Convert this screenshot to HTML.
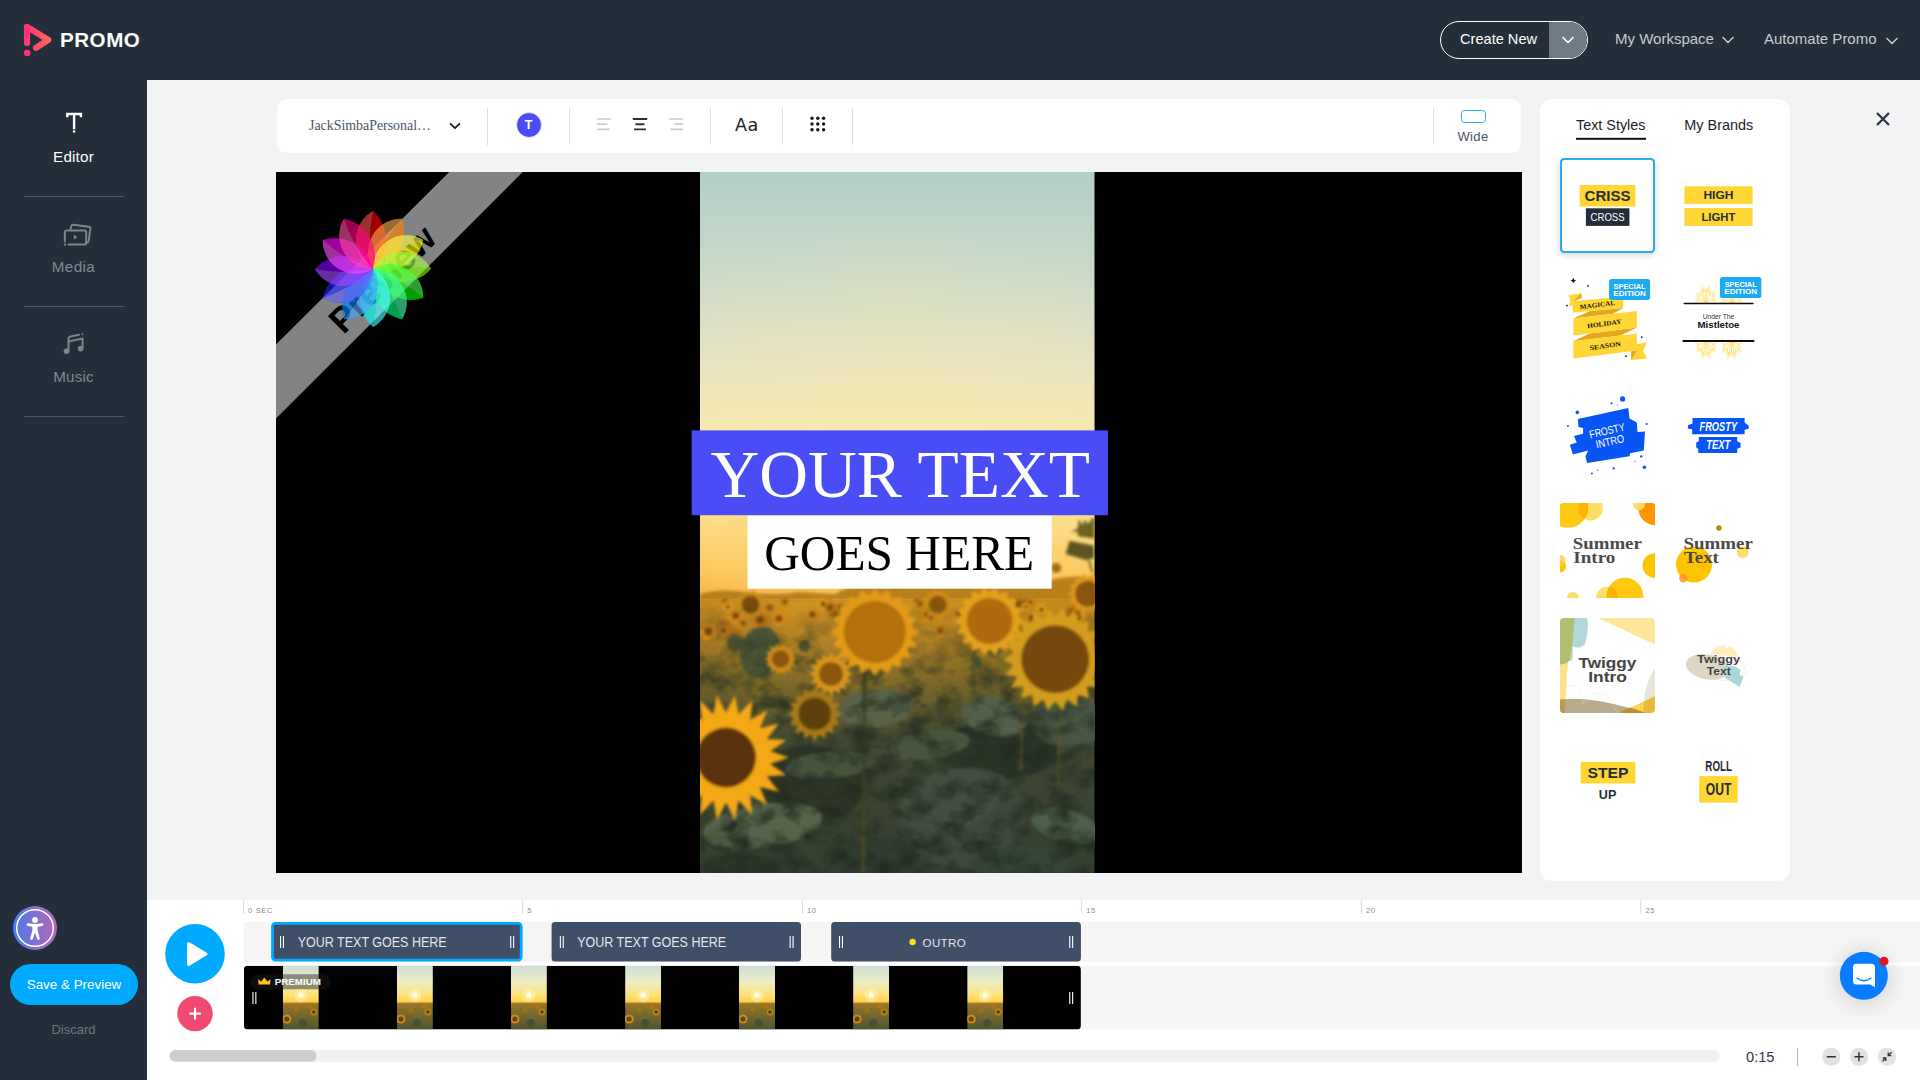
<!DOCTYPE html>
<html lang="en">
<head>
<meta charset="utf-8">
<title>Promo Editor</title>
<style>
*{box-sizing:border-box;margin:0;padding:0}
html,body{width:1920px;height:1080px;overflow:hidden;background:#f2f3f5;font-family:"Liberation Sans",sans-serif;}
.abs{position:absolute}
#topbar{position:absolute;left:0;top:0;width:1920px;height:80px;background:#232e3a}
#sidebar{position:absolute;left:0;top:80px;width:147px;height:1000px;background:#232e3a}
#toolbar{position:absolute;left:277px;top:99px;width:1244px;height:54px;background:#fff;border-radius:10px}
#canvas{position:absolute;left:276px;top:172px;width:1246px;height:701px;background:#000;overflow:hidden}
#panel{position:absolute;left:1540px;top:99px;width:250px;height:782px;background:#fff;border-radius:12px}
#timeline{position:absolute;left:147px;top:900px;width:1773px;height:180px;background:#fff}
.dv{top:9px;width:1px;height:37px;background:#d9dde3}
.t{position:absolute;white-space:nowrap;line-height:1}
</style>
</head>
<body>
<div id="topbar">
<svg class="abs" style="left:20px;top:20px" width="36" height="40" viewBox="20 20 36 40">
<defs><linearGradient id="lg1" x1="23" y1="0" x2="52" y2="0" gradientUnits="userSpaceOnUse"><stop offset="0" stop-color="#ff2e74"/><stop offset="1" stop-color="#ff6b5e"/></linearGradient></defs>
<path d="M27 43 L27 26.8 L48.2 39.8 L36 47.8" fill="none" stroke="url(#lg1)" stroke-width="6.2" stroke-linecap="round" stroke-linejoin="round"/>
<circle cx="27.2" cy="53" r="3.3" fill="#ff2e74"/>
</svg>
<div class="t" id="promo" style="left:60px;top:29px;font-size:20.6px;font-weight:bold;color:#fff;letter-spacing:0.5px;line-height:22px">PROMO</div>
<div class="abs" style="left:1440px;top:21px;width:148px;height:38px;border:1px solid #fff;border-radius:19px;overflow:hidden">
  <div class="abs" style="left:108px;top:0;width:40px;height:38px;background:#717b85"></div>
  <svg class="abs" style="left:120px;top:13px" width="14" height="10" viewBox="0 0 14 10"><path d="M2 2.5 L7 7.5 L12 2.5" fill="none" stroke="#fff" stroke-width="1.6" stroke-linecap="round" stroke-linejoin="round"/></svg>
</div>
<div class="t" id="cn" style="left:1460px;top:30px;font-size:14.6px;color:#fff;line-height:18px">Create New</div>
<div class="t" id="mw" style="left:1615px;top:30px;font-size:15px;color:#c6cbd0;line-height:18px">My Workspace</div>
<svg class="abs" style="left:1721px;top:35px" width="14" height="10" viewBox="0 0 14 10"><path d="M2 2.5 L7 7.5 L12 2.5" fill="none" stroke="#c6cbd0" stroke-width="1.5" stroke-linecap="round" stroke-linejoin="round"/></svg>
<div class="t" id="ap" style="left:1764px;top:30px;font-size:15px;color:#c6cbd0;line-height:18px">Automate Promo</div>
<svg class="abs" style="left:1885px;top:36px" width="14" height="10" viewBox="0 0 14 10"><path d="M2 2.5 L7 7.5 L12 2.5" fill="none" stroke="#c6cbd0" stroke-width="1.5" stroke-linecap="round" stroke-linejoin="round"/></svg>
</div>
<div id="sidebar" style="top:80px">
<!-- coordinates relative to page: subtract 80 from y -->
<svg class="abs" style="left:60px;top:28px" width="30" height="28" viewBox="60 108 30 28">
<path d="M67.3 117.2 L67.3 114 L80.9 114 L80.9 117.2 M74.1 114 L74.1 129.2" fill="none" stroke="#fff" stroke-width="2.4" stroke-linejoin="miter"/>
<rect x="72.9" y="130.4" width="2.4" height="2.2" fill="#fff"/>
</svg>
<div class="t" id="ed" style="left:0;width:147px;text-align:center;top:68px;font-size:15.2px;color:#fff;line-height:18px;letter-spacing:0.2px">Editor</div>
<div class="abs" style="left:24px;top:116px;width:100px;height:1px;background:#4b5965"></div>
<svg class="abs" style="left:58px;top:138px" width="40" height="32" viewBox="58 218 40 32">
<g fill="none" stroke="#78868e" stroke-width="2" stroke-linecap="round" stroke-linejoin="round">
<path d="M70.5 229.5 L71.2 226.3 Q71.6 224.6 73.3 224.8 L88.8 226.8 Q90.6 227.1 90.4 228.9 L88.6 241 Q88.3 242.6 86.8 242.4"/>
<path d="M64.8 241.5 L64.8 232.8 Q64.8 230.6 67 230.6 L84 230.6 Q86.2 230.6 86.2 232.8 L86.2 242.4 Q86.2 244.6 84 244.6 L68.5 244.6"/>
</g>
<rect x="64" y="243.6" width="2" height="2" fill="#78868e"/>
<path d="M73.8 234.6 L77.4 237.2 L73.8 239.8 Z" fill="#78868e"/>
</svg>
<div class="t" id="md" style="left:0;width:147px;text-align:center;top:178px;font-size:15.2px;color:#7d8a92;line-height:18px;letter-spacing:0.4px">Media</div>
<div class="abs" style="left:24px;top:226px;width:100px;height:1px;background:#4b5965"></div>
<svg class="abs" style="left:58px;top:248px" width="32" height="30" viewBox="58 328 32 30">
<g fill="#78868e">
<circle cx="66.5" cy="351.2" r="2.8"/><circle cx="80.6" cy="348.6" r="2.8"/>
<circle cx="82.4" cy="334.2" r="1"/>
</g>
<g fill="none" stroke="#78868e" stroke-width="2" stroke-linecap="round" stroke-linejoin="round">
<path d="M68.5 351 L68.5 339 Q68.5 337 70.5 336.6 L79 334.8"/>
<path d="M68.6 341.6 L82.6 338.6 L82.6 348.5"/>
</g>
</svg>
<div class="t" id="mu" style="left:0;width:147px;text-align:center;top:288px;font-size:15.2px;color:#7d8a92;line-height:18px;letter-spacing:0.2px">Music</div>
<div class="abs" style="left:24px;top:336px;width:100px;height:1px;background:#4b5965"></div>

<div class="abs" style="left:13px;top:826px;width:44px;height:44px;border-radius:50%;background:linear-gradient(90deg,#4a7ce9,#b866b4)"></div>
<svg class="abs" style="left:13px;top:826px" width="44" height="44" viewBox="0 0 44 44">
<circle cx="22" cy="22" r="18.3" fill="none" stroke="#fff" stroke-width="1.5"/>
<circle cx="22" cy="14" r="2.9" fill="#fff"/>
<path d="M13.6 18 Q13.2 19.6 14.8 19.9 L19.4 20.8 L19.4 24.5 L17.2 32.2 Q16.9 33.6 18.2 33.9 Q19.4 34.1 19.8 32.9 L22 26.6 L24.2 32.9 Q24.6 34.1 25.8 33.9 Q27.1 33.6 26.8 32.2 L24.6 24.5 L24.6 20.8 L29.2 19.9 Q30.8 19.6 30.4 18 Q30 17 28.6 17.3 Q22 18.9 15.4 17.3 Q14 17 13.6 18 Z" fill="#fff"/>
</svg>
<div class="abs" style="left:10px;top:884px;width:128px;height:41px;border-radius:21px;background:#00aaff"></div>
<div class="t" id="sp" style="left:10px;width:128px;text-align:center;top:897px;font-size:13.4px;color:#fff;line-height:16px">Save &amp; Preview</div>
<div class="t" id="dc" style="left:0;width:147px;text-align:center;top:942px;font-size:13px;color:#6c7780;line-height:16px">Discard</div>
</div>
<div id="toolbar">
<!-- page coords: subtract 277 x, 99 y -->
<div class="t" id="fn" style="left:32px;top:18px;font-family:'Liberation Serif',serif;font-size:13.9px;color:#4a5568;line-height:18px">JackSimbaPersonal…</div>
<svg class="abs" style="left:171px;top:21px" width="14" height="12" viewBox="0 0 14 12"><path d="M2.6 3.8 L7 8.2 L11.4 3.8" fill="none" stroke="#1d2126" stroke-width="1.8" stroke-linecap="round" stroke-linejoin="round"/></svg>
<div class="abs dv" style="left:210px"></div>
<div class="abs" style="left:238.5px;top:12.5px;width:26px;height:26px;border-radius:50%;background:#4a4df4;border:1.5px solid #e4e5fb"></div>
<div class="t" style="left:238.5px;top:18.5px;width:26px;text-align:center;font-size:12.5px;font-weight:bold;color:#fff;line-height:14px">T</div>
<div class="abs dv" style="left:292px"></div>
<svg class="abs" style="left:315px;top:14px" width="100" height="22" viewBox="592 113 100 22">
<g fill="none" stroke-width="1.7" stroke="#c6cbd4">
<path d="M597 119 H611.2 M597 124.2 H607.4 M597 129.4 H609.8"/>
<path d="M668.8 119 H683.2 M674.4 124.2 H683.2 M670.3 129.4 H683.2"/>
</g>
<path d="M632.8 119 H647.2 M635.4 124.2 H644.4 M634 129.4 H646" fill="none" stroke="#2b2f36" stroke-width="1.9"/>
</svg>
<div class="abs dv" style="left:433px"></div>
<div class="t" id="aa" style="left:458px;top:15px;letter-spacing:0.6px;font-family:'DejaVu Sans','Liberation Sans',sans-serif;font-size:17.5px;color:#1d2126;line-height:22px">Aa</div>
<div class="abs dv" style="left:505px"></div>
<svg class="abs" style="left:531px;top:15px" width="20" height="20" viewBox="808 114 20 20"><g fill="#16191d">
<circle cx="812" cy="118.2" r="1.7"/><circle cx="817.8" cy="118.2" r="1.7"/><circle cx="823.6" cy="118.2" r="1.7"/>
<circle cx="812" cy="124" r="1.7"/><circle cx="817.8" cy="124" r="1.7"/><circle cx="823.6" cy="124" r="1.7"/>
<circle cx="812" cy="129.8" r="1.7"/><circle cx="817.8" cy="129.8" r="1.7"/><circle cx="823.6" cy="129.8" r="1.7"/>
</g></svg>
<div class="abs dv" style="left:575px"></div>
<div class="abs dv" style="left:1156px"></div>
<div class="abs" style="left:1184px;top:11px;width:25px;height:13px;border:1.3px solid #2aaaf2;border-radius:3.5px"></div>
<div class="t" id="wd" style="left:1166px;width:60px;text-align:center;top:30px;font-size:13px;color:#4a5568;line-height:16px;letter-spacing:0.4px">Wide</div>
</div>
<div id="canvas">
<svg class="abs" style="left:0;top:0" width="1246" height="701" viewBox="276 172 1246 701">
<defs>
<linearGradient id="sky" x1="0" y1="172" x2="0" y2="600" gradientUnits="userSpaceOnUse">
<stop offset="0" stop-color="#b2cfc8"/><stop offset="0.2" stop-color="#c6d8c8"/><stop offset="0.42" stop-color="#e2e2c5"/><stop offset="0.6" stop-color="#f6e7b6"/><stop offset="0.8" stop-color="#fbdd84"/><stop offset="0.93" stop-color="#fac04c"/><stop offset="0.975" stop-color="#f7ac36"/><stop offset="1" stop-color="#f3a02a"/>
</linearGradient>
<radialGradient id="warm" cx="897" cy="560" r="340" gradientUnits="userSpaceOnUse"><stop offset="0" stop-color="#ffe9a4" stop-opacity="0.6"/><stop offset="0.5" stop-color="#ffe9a4" stop-opacity="0.3"/><stop offset="1" stop-color="#ffe9a4" stop-opacity="0"/></radialGradient>
<linearGradient id="field" x1="0" y1="596" x2="0" y2="873" gradientUnits="userSpaceOnUse">
<stop offset="0" stop-color="#cf8e1e"/><stop offset="0.15" stop-color="#a67a20"/><stop offset="0.33" stop-color="#6e6029"/><stop offset="0.5" stop-color="#414932"/><stop offset="1" stop-color="#343e30"/>
</linearGradient>
<radialGradient id="glow" cx="850" cy="596" r="170" gradientUnits="userSpaceOnUse"><stop offset="0" stop-color="#ffbe48" stop-opacity="0.75"/><stop offset="1" stop-color="#ffb030" stop-opacity="0"/></radialGradient>
<clipPath id="vclip"><rect x="700" y="172" width="394.5" height="701"/></clipPath>
<filter id="bl" x="-5%" y="-5%" width="110%" height="110%"><feGaussianBlur stdDeviation="1.8"/></filter>
<filter id="tex" x="0" y="0" width="100%" height="100%" color-interpolation-filters="sRGB"><feTurbulence type="fractalNoise" baseFrequency="0.04 0.055" numOctaves="3" seed="5"/><feColorMatrix type="matrix" values="0 0 0 0 0.13  0 0 0 0 0.17  0 0 0 0 0.12  0 0 0 2.4 -0.95"/></filter>
<linearGradient id="tmg" x1="0" y1="600" x2="0" y2="873" gradientUnits="userSpaceOnUse"><stop offset="0" stop-color="#fff" stop-opacity="0"/><stop offset="0.12" stop-color="#fff" stop-opacity="0.35"/><stop offset="0.4" stop-color="#fff" stop-opacity="0.8"/><stop offset="1" stop-color="#fff" stop-opacity="0.9"/></linearGradient><mask id="tmask" maskUnits="userSpaceOnUse" x="700" y="596" width="395" height="277"><rect x="700" y="596" width="395" height="277" fill="url(#tmg)"/></mask>
</defs>
<g clip-path="url(#vclip)">
<rect x="700" y="172" width="395" height="430" fill="url(#sky)"/>
<rect x="700" y="596" width="395" height="277" fill="url(#field)"/>
<rect x="700" y="172" width="395" height="428" fill="url(#warm)"/><rect x="700" y="420" width="395" height="180" fill="url(#glow)" opacity="0.45"/><rect x="700" y="596" width="395" height="180" fill="url(#glow)" opacity="0.3"/>
<g filter="url(#bl)">
<!--SF-BEGIN-->
<path d="M700 597 L700 594 Q720 588 745 592 Q770 596 800 592 L835 594 Q850 584 870 586 Q900 580 930 584 Q960 578 990 582 Q1020 576 1050 580 Q1075 574 1095 578 L1095 600 L700 600 Z" fill="#b97f1c"/>
<polygon points="1078.7,519.3 1082.8,524.9 1084.9,519.3 1087.9,523.9 1093.0,517.2 1094.5,519.3 1094.5,538.6 1078.7,536.6 1076.7,531.5 1070.6,532.0 1077.7,528.4" fill="#6e6222"/><polygon points="1065.5,553.9 1069.6,540.7 1094.0,545.8 1094.0,558.0 1085.9,560.0" fill="#5c5420"/><path d="M1088.5 560 L1092.5 572" stroke="#5c5420" stroke-width="1.6"/><circle cx="1056.3" cy="568" r="5" fill="#a86a14"/>
<circle cx="827.9" cy="604.3" r="5.3" fill="#d98a18"/><circle cx="827.9" cy="604.3" r="2.7" fill="#7a4a10"/>
<circle cx="1024.4" cy="602.0" r="4.8" fill="#b8801a"/><circle cx="1024.4" cy="602.0" r="2.4" fill="#7a4a10"/>
<circle cx="784.8" cy="601.6" r="4.3" fill="#c27a14"/><circle cx="784.8" cy="601.6" r="2.2" fill="#7a4a10"/>
<circle cx="735.8" cy="615.8" r="7.3" fill="#d98a18"/><circle cx="735.8" cy="615.8" r="3.6" fill="#7a4a10"/>
<circle cx="1074.2" cy="624.5" r="7.2" fill="#d98a18"/><circle cx="1074.2" cy="624.5" r="3.6" fill="#7a4a10"/>
<circle cx="928.0" cy="614.7" r="7.7" fill="#d98a18"/><circle cx="928.0" cy="614.7" r="3.9" fill="#7a4a10"/>
<circle cx="919.9" cy="603.6" r="4.5" fill="#b8801a"/><circle cx="919.9" cy="603.6" r="2.3" fill="#7a4a10"/>
<circle cx="746.5" cy="611.0" r="6.7" fill="#c27a14"/><circle cx="746.5" cy="611.0" r="3.3" fill="#7a4a10"/>
<circle cx="740.7" cy="622.0" r="5.2" fill="#d98a18"/><circle cx="740.7" cy="622.0" r="2.6" fill="#7a4a10"/>
<circle cx="916.4" cy="600.6" r="3.2" fill="#c27a14"/><circle cx="916.4" cy="600.6" r="1.6" fill="#7a4a10"/>
<circle cx="896.1" cy="620.3" r="7.6" fill="#a86a14"/><circle cx="896.1" cy="620.3" r="3.8" fill="#7a4a10"/>
<circle cx="931.3" cy="617.0" r="5.3" fill="#c27a14"/><circle cx="931.3" cy="617.0" r="2.6" fill="#7a4a10"/>
<circle cx="976.1" cy="608.3" r="5.5" fill="#b8801a"/><circle cx="976.1" cy="608.3" r="2.7" fill="#7a4a10"/>
<circle cx="895.6" cy="612.4" r="5.5" fill="#b8801a"/><circle cx="895.6" cy="612.4" r="2.7" fill="#7a4a10"/>
<circle cx="1087.2" cy="603.0" r="4.4" fill="#e8a020"/><circle cx="1087.2" cy="603.0" r="2.2" fill="#7a4a10"/>
<circle cx="760.0" cy="618.5" r="4.3" fill="#d98a18"/><circle cx="760.0" cy="618.5" r="2.2" fill="#7a4a10"/>
<circle cx="1002.0" cy="622.1" r="8.3" fill="#e8a020"/><circle cx="1002.0" cy="622.1" r="4.1" fill="#7a4a10"/>
<circle cx="834.3" cy="612.7" r="5.7" fill="#a86a14"/><circle cx="834.3" cy="612.7" r="2.8" fill="#7a4a10"/>
<circle cx="727.2" cy="601.9" r="3.9" fill="#d98a18"/><circle cx="727.2" cy="601.9" r="1.9" fill="#7a4a10"/>
<circle cx="724.0" cy="627.5" r="7.8" fill="#a86a14"/><circle cx="724.0" cy="627.5" r="3.9" fill="#7a4a10"/>
<circle cx="812.4" cy="614.2" r="6.5" fill="#d98a18"/><circle cx="812.4" cy="614.2" r="3.2" fill="#7a4a10"/>
<circle cx="1071.6" cy="612.9" r="6.1" fill="#a86a14"/><circle cx="1071.6" cy="612.9" r="3.1" fill="#7a4a10"/>
<circle cx="723.3" cy="630.3" r="5.6" fill="#c27a14"/><circle cx="723.3" cy="630.3" r="2.8" fill="#7a4a10"/>
<circle cx="857.2" cy="636.5" r="8.0" fill="#c27a14"/><circle cx="857.2" cy="636.5" r="4.0" fill="#7a4a10"/>
<circle cx="877.4" cy="621.1" r="8.2" fill="#a86a14"/><circle cx="877.4" cy="621.1" r="4.1" fill="#7a4a10"/>
<circle cx="1041.3" cy="609.7" r="5.1" fill="#e8a020"/><circle cx="1041.3" cy="609.7" r="2.5" fill="#7a4a10"/>
<circle cx="969.7" cy="614.0" r="4.8" fill="#d98a18"/><circle cx="969.7" cy="614.0" r="2.4" fill="#7a4a10"/>
<circle cx="769.6" cy="607.7" r="4.3" fill="#a86a14"/><circle cx="769.6" cy="607.7" r="2.1" fill="#7a4a10"/>
<circle cx="1028.3" cy="605.7" r="4.2" fill="#c27a14"/><circle cx="1028.3" cy="605.7" r="2.1" fill="#7a4a10"/>
<circle cx="865.5" cy="613.5" r="6.0" fill="#c27a14"/><circle cx="865.5" cy="613.5" r="3.0" fill="#7a4a10"/>
<circle cx="972.7" cy="619.7" r="6.9" fill="#d98a18"/><circle cx="972.7" cy="619.7" r="3.4" fill="#7a4a10"/>
<circle cx="880.4" cy="634.6" r="10.2" fill="#b8801a"/><circle cx="880.4" cy="634.6" r="5.1" fill="#7a4a10"/>
<circle cx="855.0" cy="614.8" r="4.3" fill="#a86a14"/><circle cx="855.0" cy="614.8" r="2.2" fill="#7a4a10"/>
<circle cx="724.6" cy="600.8" r="3.6" fill="#c27a14"/><circle cx="724.6" cy="600.8" r="1.8" fill="#7a4a10"/>
<circle cx="743.4" cy="623.2" r="4.9" fill="#b8801a"/><circle cx="743.4" cy="623.2" r="2.5" fill="#7a4a10"/>
<circle cx="759.7" cy="602.3" r="4.2" fill="#d98a18"/><circle cx="759.7" cy="602.3" r="2.1" fill="#7a4a10"/>
<circle cx="727.8" cy="606.7" r="4.7" fill="#e8a020"/><circle cx="727.8" cy="606.7" r="2.3" fill="#7a4a10"/>
<circle cx="1077.4" cy="623.3" r="6.6" fill="#d98a18"/><circle cx="1077.4" cy="623.3" r="3.3" fill="#7a4a10"/>
<circle cx="1035.3" cy="639.7" r="8.2" fill="#a86a14"/><circle cx="1035.3" cy="639.7" r="4.1" fill="#7a4a10"/>
<circle cx="823.2" cy="604.1" r="5.6" fill="#e8a020"/><circle cx="823.2" cy="604.1" r="2.8" fill="#7a4a10"/>
<circle cx="889.1" cy="627.1" r="7.2" fill="#c27a14"/><circle cx="889.1" cy="627.1" r="3.6" fill="#7a4a10"/>
<circle cx="1075.6" cy="620.2" r="4.9" fill="#b8801a"/><circle cx="1075.6" cy="620.2" r="2.5" fill="#7a4a10"/>
<circle cx="1061.1" cy="629.8" r="6.4" fill="#d98a18"/><circle cx="1061.1" cy="629.8" r="3.2" fill="#7a4a10"/>
<circle cx="975.0" cy="609.0" r="4.8" fill="#c27a14"/><circle cx="975.0" cy="609.0" r="2.4" fill="#7a4a10"/>
<circle cx="840.5" cy="607.4" r="5.3" fill="#b8801a"/><circle cx="840.5" cy="607.4" r="2.6" fill="#7a4a10"/>
<circle cx="830.2" cy="607.4" r="6.2" fill="#c27a14"/><circle cx="830.2" cy="607.4" r="3.1" fill="#7a4a10"/>
<circle cx="1018.4" cy="632.4" r="8.9" fill="#c27a14"/><circle cx="1018.4" cy="632.4" r="4.4" fill="#7a4a10"/>
<circle cx="779.0" cy="618.7" r="7.2" fill="#d98a18"/><circle cx="779.0" cy="618.7" r="3.6" fill="#7a4a10"/>
<circle cx="1012.1" cy="617.8" r="4.9" fill="#b8801a"/><circle cx="1012.1" cy="617.8" r="2.5" fill="#7a4a10"/>
<circle cx="1077.8" cy="616.8" r="7.8" fill="#e8a020"/><circle cx="1077.8" cy="616.8" r="3.9" fill="#7a4a10"/>
<circle cx="1077.2" cy="613.3" r="4.7" fill="#c27a14"/><circle cx="1077.2" cy="613.3" r="2.3" fill="#7a4a10"/>
<circle cx="885.7" cy="612.2" r="5.6" fill="#b8801a"/><circle cx="885.7" cy="612.2" r="2.8" fill="#7a4a10"/>
<circle cx="1032.0" cy="618.1" r="6.8" fill="#d98a18"/><circle cx="1032.0" cy="618.1" r="3.4" fill="#7a4a10"/>
<circle cx="1029.7" cy="603.0" r="4.4" fill="#c27a14"/><circle cx="1029.7" cy="603.0" r="2.2" fill="#7a4a10"/>
<circle cx="888.8" cy="605.5" r="5.9" fill="#e8a020"/><circle cx="888.8" cy="605.5" r="3.0" fill="#7a4a10"/>
<circle cx="734.3" cy="637.7" r="9.4" fill="#a86a14"/><circle cx="734.3" cy="637.7" r="4.7" fill="#7a4a10"/>
<circle cx="858.5" cy="637.8" r="9.4" fill="#c27a14"/><circle cx="858.5" cy="637.8" r="4.7" fill="#7a4a10"/>
<circle cx="1092.3" cy="599.2" r="4.6" fill="#a86a14"/><circle cx="1092.3" cy="599.2" r="2.3" fill="#7a4a10"/>
<circle cx="1018.6" cy="604.1" r="5.9" fill="#a86a14"/><circle cx="1018.6" cy="604.1" r="2.9" fill="#7a4a10"/>
<circle cx="959.6" cy="612.7" r="5.9" fill="#c27a14"/><circle cx="959.6" cy="612.7" r="2.9" fill="#7a4a10"/>
<circle cx="708.5" cy="631.6" r="8.7" fill="#d98a18"/><circle cx="708.5" cy="631.6" r="4.3" fill="#7a4a10"/>
<circle cx="908.0" cy="637.2" r="7.8" fill="#c27a14"/><circle cx="908.0" cy="637.2" r="3.9" fill="#7a4a10"/>
<circle cx="1026.3" cy="606.9" r="4.2" fill="#e8a020"/><circle cx="1026.3" cy="606.9" r="2.1" fill="#7a4a10"/>
<circle cx="898.0" cy="630.1" r="6.5" fill="#b8801a"/><circle cx="898.0" cy="630.1" r="3.3" fill="#7a4a10"/>
<circle cx="865.5" cy="603.5" r="6.0" fill="#e8a020"/><circle cx="865.5" cy="603.5" r="3.0" fill="#7a4a10"/>
<circle cx="1054.6" cy="625.8" r="8.4" fill="#b8801a"/><circle cx="1054.6" cy="625.8" r="4.2" fill="#7a4a10"/>
<circle cx="866.1" cy="636.5" r="8.1" fill="#b8801a"/><circle cx="866.1" cy="636.5" r="4.0" fill="#7a4a10"/>
<circle cx="760.0" cy="619.4" r="7.9" fill="#c27a14"/><circle cx="760.0" cy="619.4" r="4.0" fill="#7a4a10"/>
<circle cx="940.4" cy="630.6" r="5.7" fill="#c27a14"/><circle cx="940.4" cy="630.6" r="2.9" fill="#7a4a10"/>
<circle cx="887.0" cy="628.5" r="7.5" fill="#e8a020"/><circle cx="887.0" cy="628.5" r="3.8" fill="#7a4a10"/>
<circle cx="969.5" cy="666.5" r="7.9" fill="#7a6a24"/>
<circle cx="1048.9" cy="642.8" r="6.8" fill="#7a6a24"/>
<circle cx="1005.0" cy="665.4" r="8.2" fill="#7a6a24"/>
<circle cx="875.1" cy="670.6" r="8.0" fill="#5c5a2a"/>
<circle cx="973.6" cy="662.6" r="8.1" fill="#4e5230"/>
<circle cx="900.6" cy="652.4" r="8.1" fill="#8a7220"/>
<circle cx="1064.5" cy="684.6" r="6.8" fill="#4e5230"/>
<circle cx="754.2" cy="646.1" r="7.8" fill="#7a6a24"/>
<circle cx="965.1" cy="661.4" r="6.9" fill="#8a7220"/>
<circle cx="1009.7" cy="684.9" r="6.6" fill="#8a7220"/>
<circle cx="756.5" cy="684.1" r="9.9" fill="#5c5a2a"/>
<circle cx="994.9" cy="644.7" r="9.5" fill="#5c5a2a"/>
<circle cx="1091.0" cy="681.6" r="6.6" fill="#4e5230"/>
<circle cx="1092.7" cy="660.2" r="7.7" fill="#8a7220"/>
<circle cx="825.8" cy="676.1" r="6.1" fill="#4e5230"/>
<circle cx="874.0" cy="640.9" r="7.3" fill="#8a7220"/>
<circle cx="902.3" cy="643.2" r="9.9" fill="#5c5a2a"/>
<circle cx="1083.8" cy="645.2" r="7.1" fill="#7a6a24"/>
<circle cx="1057.8" cy="649.1" r="9.0" fill="#4e5230"/>
<circle cx="1035.6" cy="673.8" r="9.8" fill="#4e5230"/>
<circle cx="759.0" cy="686.0" r="8.3" fill="#8a7220"/>
<circle cx="735.3" cy="642.9" r="8.8" fill="#4e5230"/>
<circle cx="1053.6" cy="653.4" r="6.1" fill="#7a6a24"/>
<circle cx="1016.6" cy="644.2" r="9.4" fill="#7a6a24"/>
<circle cx="804.5" cy="646.1" r="6.0" fill="#4e5230"/>
<circle cx="1066.0" cy="653.4" r="6.5" fill="#5c5a2a"/>
<circle cx="1070.6" cy="688.5" r="7.0" fill="#5c5a2a"/>
<circle cx="779.7" cy="655.6" r="7.2" fill="#5c5a2a"/>
<circle cx="814.5" cy="665.0" r="6.7" fill="#8a7220"/>
<circle cx="1017.5" cy="689.7" r="6.1" fill="#7a6a24"/>
<polygon points="765.5,604.6 761.9,607.2 764.0,611.1 759.6,611.9 759.9,616.3 755.6,615.1 753.8,619.2 750.5,616.3 747.2,619.2 745.4,615.1 741.1,616.3 741.4,611.9 737.0,611.1 739.1,607.2 735.5,604.6 739.1,602.0 737.0,598.1 741.4,597.3 741.1,592.9 745.4,594.1 747.2,590.0 750.5,592.9 753.8,590.0 755.6,594.1 759.9,592.9 759.6,597.3 764.0,598.1 761.9,602.0" fill="#c88a1c"/><circle cx="750.5" cy="604.6" r="9" fill="#7a4c10"/>
<polygon points="953.7,604.6 949.5,607.3 952.1,611.5 947.2,612.2 947.7,617.1 943.0,615.5 941.3,620.2 937.7,616.8 934.1,620.2 932.4,615.5 927.7,617.1 928.2,612.2 923.3,611.5 925.9,607.3 921.7,604.6 925.9,601.9 923.3,597.7 928.2,597.0 927.7,592.1 932.4,593.7 934.1,589.0 937.7,592.5 941.3,589.0 943.0,593.7 947.7,592.1 947.2,597.0 952.1,597.7 949.5,601.9" fill="#d08c18"/><circle cx="937.7" cy="604.6" r="9" fill="#8a560e"/>
<polygon points="1108.0,593.7 1103.7,597.3 1106.0,602.4 1100.6,603.8 1100.5,609.3 1095.0,608.3 1092.5,613.2 1088.0,609.9 1083.5,613.2 1081.0,608.3 1075.5,609.3 1075.4,603.8 1070.0,602.4 1072.3,597.3 1068.0,593.7 1072.3,590.1 1070.0,585.0 1075.4,583.6 1075.5,578.1 1081.0,579.1 1083.5,574.2 1088.0,577.6 1092.5,574.2 1095.0,579.1 1100.5,578.1 1100.6,583.6 1106.0,585.0 1103.7,590.1" fill="#e0981c"/><circle cx="1088" cy="593.7" r="13" fill="#8a5410"/>
<ellipse cx="760" cy="652" rx="20" ry="26" fill="#4c5636" transform="rotate(12 760 652)"/>
<ellipse cx="809" cy="785" rx="55" ry="40" fill="#2e3628" transform="rotate(0 809 785)"/>
<ellipse cx="1000.5" cy="749.4" rx="60" ry="30" fill="#2c3428" transform="rotate(0 1000.5 749.4)"/>
<ellipse cx="874.9" cy="708.4" rx="38" ry="19" fill="#596246" transform="rotate(-6 874.9 708.4)"/>
<ellipse cx="995" cy="716.6" rx="33" ry="19" fill="#525f49" transform="rotate(10 995 716.6)"/>
<ellipse cx="1068.9" cy="722" rx="38" ry="25" fill="#465442" transform="rotate(0 1068.9 722)"/>
<ellipse cx="930" cy="745" rx="40" ry="14" fill="#49563e" transform="rotate(-8 930 745)"/>
<ellipse cx="830" cy="765" rx="45" ry="13" fill="#46543c" transform="rotate(-5 830 765)"/>
<ellipse cx="962.3" cy="817.7" rx="63" ry="49" fill="#3c4a3b" transform="rotate(-12 962.3 817.7)"/>
<ellipse cx="950" cy="800" rx="50" ry="30" fill="#465445" transform="rotate(-12 950 800)" fill-opacity="0.6"/>
<ellipse cx="762.8" cy="825.9" rx="60" ry="22" fill="#55634a" transform="rotate(-8 762.8 825.9)"/>
<ellipse cx="1066" cy="825.9" rx="36" ry="16" fill="#4c5e4a" transform="rotate(15 1066 825.9)"/>
<ellipse cx="880" cy="856" rx="40" ry="18" fill="#2f3a2e" transform="rotate(0 880 856)"/>
<ellipse cx="1020" cy="862" rx="50" ry="16" fill="#344434" transform="rotate(0 1020 862)"/>
<ellipse cx="740" cy="866" rx="40" ry="12" fill="#2c3528" transform="rotate(0 740 866)"/>
<path d="M864.5 668 L863 873" stroke="#4a4a22" stroke-width="3.6" fill="none"/><path d="M974.6 650 L973 702 M1022 705 L1021 770 M1060 700 L1058 790" stroke="#55542a" stroke-width="2.4" fill="none"/>
<!--SF-END-->
</g>
<g mask="url(#tmask)"><rect x="700" y="596" width="395" height="277" filter="url(#tex)"/></g>
<g filter="url(#bl)">
<!--MAINF-->
<polygon points="918.9,631.9 911.3,637.7 916.7,645.5 907.7,648.6 910.5,657.8 901.0,658.0 900.8,667.5 891.6,664.7 888.5,673.7 880.7,668.3 874.9,675.9 869.1,668.3 861.3,673.7 858.2,664.7 849.0,667.5 848.8,658.0 839.3,657.8 842.1,648.6 833.1,645.5 838.5,637.7 830.9,631.9 838.5,626.1 833.1,618.3 842.1,615.2 839.3,606.0 848.8,605.8 849.0,596.3 858.2,599.1 861.3,590.1 869.1,595.5 874.9,587.9 880.7,595.5 888.5,590.1 891.6,599.1 900.8,596.3 901.0,605.8 910.5,606.0 907.7,615.2 916.7,618.3 911.3,626.1" fill="#e29a18"/><circle cx="874.9" cy="631.9" r="31" fill="#b4700c"/>
<polygon points="1024.6,621.0 1017.6,625.9 1022.5,633.0 1014.2,635.2 1016.4,643.5 1007.9,642.8 1007.1,651.3 999.3,647.7 995.7,655.5 989.6,649.4 983.5,655.5 979.9,647.7 972.1,651.3 971.3,642.8 962.8,643.5 965.0,635.2 956.7,633.0 961.6,625.9 954.6,621.0 961.6,616.1 956.7,609.0 965.0,606.8 962.8,598.5 971.3,599.2 972.1,590.7 979.9,594.3 983.5,586.5 989.6,592.6 995.7,586.5 999.3,594.3 1007.1,590.7 1007.9,599.2 1016.4,598.5 1014.2,606.8 1022.5,609.0 1017.6,616.1" fill="#e2a01c"/><circle cx="989.6" cy="621" r="23" fill="#b06a10"/>
<polygon points="1107.2,659.2 1096.9,665.2 1105.1,673.9 1093.5,676.7 1098.9,687.3 1087.0,686.8 1089.3,698.5 1078.0,694.6 1076.8,706.5 1067.1,699.6 1062.6,710.7 1055.2,701.3 1047.8,710.7 1043.3,699.6 1033.6,706.5 1032.4,694.6 1021.1,698.5 1023.4,686.8 1011.5,687.3 1016.9,676.7 1005.3,673.9 1013.5,665.2 1003.2,659.2 1013.5,653.2 1005.3,644.5 1016.9,641.7 1011.5,631.1 1023.4,631.6 1021.1,619.9 1032.4,623.8 1033.6,611.9 1043.3,618.8 1047.8,607.7 1055.2,617.1 1062.6,607.7 1067.1,618.8 1076.8,611.9 1078.0,623.8 1089.3,619.9 1087.0,631.6 1098.9,631.1 1093.5,641.7 1105.1,644.5 1096.9,653.2" fill="#d39c1e"/><circle cx="1055.2" cy="659.2" r="34" fill="#74490d"/>
<polygon points="789.0,757.6 770.4,764.0 786.4,775.3 766.8,776.2 779.0,791.7 759.9,787.0 767.3,805.2 750.2,795.3 752.2,814.9 738.6,800.6 735.0,820.0 726.0,802.5 717.0,820.0 713.4,800.6 699.8,814.9 701.8,795.3 684.7,805.2 692.1,787.0 673.0,791.7 685.2,776.2 665.6,775.3 681.6,764.0 663.0,757.6 681.6,751.2 665.6,739.9 685.2,739.0 673.0,723.5 692.1,728.2 684.7,710.0 701.8,719.9 699.8,700.3 713.4,714.6 717.0,695.2 726.0,712.8 735.0,695.2 738.6,714.6 752.2,700.3 750.2,719.9 767.3,710.0 759.9,728.2 779.0,723.5 766.8,739.0 786.4,739.9 770.4,751.2" fill="#f5a812"/><circle cx="726" cy="757.6" r="30" fill="#5a3008"/>
<polygon points="853.0,674.0 847.2,677.2 851.3,682.4 844.7,683.2 846.6,689.6 840.2,687.7 839.4,694.3 834.2,690.2 831.0,696.0 827.8,690.2 822.6,694.3 821.8,687.7 815.4,689.6 817.3,683.2 810.7,682.4 814.8,677.2 809.0,674.0 814.8,670.8 810.7,665.6 817.3,664.8 815.4,658.4 821.8,660.3 822.6,653.7 827.8,657.8 831.0,652.0 834.2,657.8 839.4,653.7 840.2,660.3 846.6,658.4 844.7,664.8 851.3,665.6 847.2,670.8" fill="#d8961a"/><circle cx="831" cy="674" r="12" fill="#8a560e"/>
<polygon points="841.8,713.9 835.6,718.0 839.7,724.2 832.4,725.7 833.9,733.0 826.6,731.5 825.1,738.8 818.9,734.7 814.8,740.9 810.7,734.7 804.5,738.8 803.0,731.5 795.7,733.0 797.2,725.7 789.9,724.2 794.0,718.0 787.8,713.9 794.0,709.8 789.9,703.6 797.2,702.1 795.7,694.8 803.0,696.3 804.5,689.0 810.7,693.1 814.8,686.9 818.9,693.1 825.1,689.0 826.6,696.3 833.9,694.8 832.4,702.1 839.7,703.6 835.6,709.8" fill="#a87a18"/><circle cx="814.8" cy="713.9" r="16.4" fill="#5e400c"/>
<polygon points="796.6,659.0 792.4,661.7 795.0,665.9 790.1,666.6 790.6,671.5 785.9,669.9 784.2,674.6 780.6,671.1 777.0,674.6 775.3,669.9 770.6,671.5 771.1,666.6 766.2,665.9 768.8,661.7 764.6,659.0 768.8,656.3 766.2,652.1 771.1,651.4 770.6,646.5 775.3,648.1 777.0,643.4 780.6,646.9 784.2,643.4 785.9,648.1 790.6,646.5 790.1,651.4 795.0,652.1 792.4,656.3" fill="#d08c18"/><circle cx="780.6" cy="659" r="9" fill="#8a560e"/>
</g>
</g>
<!-- preview watermark -->
<polygon points="449.2,172 522.8,172 276,418.6 276,344.6" fill="#838383"/>
<text x="382" y="279" font-size="35.5px" font-weight="bold" fill="#000" text-anchor="middle" transform="rotate(-45 382 279)" dy="12.5" font-family="'Liberation Sans',sans-serif">Preview</text>
<g transform="translate(373 269)"><g transform="rotate(0)" opacity="0.62"><path d="M0 0 A33.2 33.2 0 0 1 0 -58 A38.8 38.8 0 0 1 0 0Z" fill="#ff0000"/><path d="M0 0 A33.2 33.2 0 0 1 0 -58 A141.7 141.7 0 0 0 0 0Z" fill="#ff4c4c"/></g><g transform="rotate(30)" opacity="0.62"><path d="M0 0 A33.2 33.2 0 0 1 0 -58 A38.8 38.8 0 0 1 0 0Z" fill="#ff8000"/><path d="M0 0 A33.2 33.2 0 0 1 0 -58 A141.7 141.7 0 0 0 0 0Z" fill="#ffa64c"/></g><g transform="rotate(60)" opacity="0.62"><path d="M0 0 A33.2 33.2 0 0 1 0 -58 A38.8 38.8 0 0 1 0 0Z" fill="#ffff00"/><path d="M0 0 A33.2 33.2 0 0 1 0 -58 A141.7 141.7 0 0 0 0 0Z" fill="#ffff4c"/></g><g transform="rotate(90)" opacity="0.62"><path d="M0 0 A33.2 33.2 0 0 1 0 -58 A38.8 38.8 0 0 1 0 0Z" fill="#80ff00"/><path d="M0 0 A33.2 33.2 0 0 1 0 -58 A141.7 141.7 0 0 0 0 0Z" fill="#a6ff4c"/></g><g transform="rotate(120)" opacity="0.62"><path d="M0 0 A33.2 33.2 0 0 1 0 -58 A38.8 38.8 0 0 1 0 0Z" fill="#00ff00"/><path d="M0 0 A33.2 33.2 0 0 1 0 -58 A141.7 141.7 0 0 0 0 0Z" fill="#4cff4c"/></g><g transform="rotate(150)" opacity="0.62"><path d="M0 0 A33.2 33.2 0 0 1 0 -58 A38.8 38.8 0 0 1 0 0Z" fill="#00ff80"/><path d="M0 0 A33.2 33.2 0 0 1 0 -58 A141.7 141.7 0 0 0 0 0Z" fill="#4cffa6"/></g><g transform="rotate(180)" opacity="0.62"><path d="M0 0 A33.2 33.2 0 0 1 0 -58 A38.8 38.8 0 0 1 0 0Z" fill="#00ffff"/><path d="M0 0 A33.2 33.2 0 0 1 0 -58 A141.7 141.7 0 0 0 0 0Z" fill="#4cffff"/></g><g transform="rotate(210)" opacity="0.62"><path d="M0 0 A33.2 33.2 0 0 1 0 -58 A38.8 38.8 0 0 1 0 0Z" fill="#0080ff"/><path d="M0 0 A33.2 33.2 0 0 1 0 -58 A141.7 141.7 0 0 0 0 0Z" fill="#4ca6ff"/></g><g transform="rotate(240)" opacity="0.62"><path d="M0 0 A33.2 33.2 0 0 1 0 -58 A38.8 38.8 0 0 1 0 0Z" fill="#2020ff"/><path d="M0 0 A33.2 33.2 0 0 1 0 -58 A141.7 141.7 0 0 0 0 0Z" fill="#6262ff"/></g><g transform="rotate(270)" opacity="0.62"><path d="M0 0 A33.2 33.2 0 0 1 0 -58 A38.8 38.8 0 0 1 0 0Z" fill="#8000ff"/><path d="M0 0 A33.2 33.2 0 0 1 0 -58 A141.7 141.7 0 0 0 0 0Z" fill="#a64cff"/></g><g transform="rotate(300)" opacity="0.62"><path d="M0 0 A33.2 33.2 0 0 1 0 -58 A38.8 38.8 0 0 1 0 0Z" fill="#ff00ff"/><path d="M0 0 A33.2 33.2 0 0 1 0 -58 A141.7 141.7 0 0 0 0 0Z" fill="#ff4cff"/></g><g transform="rotate(330)" opacity="0.62"><path d="M0 0 A33.2 33.2 0 0 1 0 -58 A38.8 38.8 0 0 1 0 0Z" fill="#ff0080"/><path d="M0 0 A33.2 33.2 0 0 1 0 -58 A141.7 141.7 0 0 0 0 0Z" fill="#ff4ca6"/></g></g>
<!-- text overlays -->
<rect x="691.7" y="430.4" width="416.2" height="84.8" fill="#4a4df5"/>
<text x="900.2" y="497.2" font-family="'Liberation Serif',serif" font-size="68px" fill="#fff" text-anchor="middle" textLength="379.5" lengthAdjust="spacingAndGlyphs">YOUR TEXT</text>
<rect x="747.5" y="515.8" width="304.2" height="72.9" fill="#fff"/>
<text x="899.2" y="570" font-family="'Liberation Serif',serif" font-size="50.5px" fill="#000" text-anchor="middle" textLength="270" lengthAdjust="spacingAndGlyphs">GOES HERE</text>
</svg>
</div>
<div id="panel">
<svg class="abs" style="left:0;top:0" width="250" height="782" viewBox="1540 99 250 782" font-family="'Liberation Sans',sans-serif">
<defs>
<clipPath id="cpS"><rect x="1560" y="503" width="95" height="95" rx="3"/></clipPath>
<clipPath id="cpT"><rect x="1560" y="618" width="95" height="95" rx="4"/></clipPath>
<filter id="sh" x="-20%" y="-20%" width="140%" height="140%"><feDropShadow dx="0" dy="2" stdDeviation="3" flood-color="#000" flood-opacity="0.18"/></filter>
</defs>
<!-- tabs -->
<text x="1576" y="130" font-size="15px" fill="#1d2126" textLength="69.5" lengthAdjust="spacingAndGlyphs">Text Styles</text>
<rect x="1576" y="137.8" width="70" height="2" fill="#111"/>
<text x="1684.3" y="130" font-size="15px" fill="#1d2126" textLength="69" lengthAdjust="spacingAndGlyphs">My Brands</text>
<!-- criss cross -->
<rect x="1561" y="159" width="93" height="93" rx="3.5" fill="#fff" stroke="#2aaaf2" stroke-width="2" filter="url(#sh)"/>
<rect x="1561" y="159" width="93" height="93" rx="3.5" fill="#fff" stroke="#2aaaf2" stroke-width="2"/>
<rect x="1579.7" y="185" width="55.7" height="21.5" fill="#ffd633"/>
<text x="1607.6" y="201.2" font-size="15.2px" font-weight="bold" fill="#232e3a" text-anchor="middle" textLength="46" lengthAdjust="spacingAndGlyphs">CRISS</text>
<rect x="1585.9" y="208.3" width="43.5" height="17.6" fill="#232e3a"/>
<text x="1607.6" y="221" font-size="10.8px" fill="#fff" text-anchor="middle" textLength="34" lengthAdjust="spacingAndGlyphs">CROSS</text>
<!-- high light -->
<rect x="1684.4" y="186.3" width="68.2" height="17.6" fill="#ffd633"/>
<text x="1718.4" y="199.2" font-size="11.4px" font-weight="bold" fill="#232e3a" text-anchor="middle" textLength="30" lengthAdjust="spacingAndGlyphs">HIGH</text>
<rect x="1684.4" y="208" width="68.2" height="17.9" fill="#ffd633"/>
<text x="1718.4" y="221.1" font-size="11.4px" font-weight="bold" fill="#232e3a" text-anchor="middle" textLength="34" lengthAdjust="spacingAndGlyphs">LIGHT</text>
<!-- row2 -->
<polygon points="1568.5,295.3 1581.4,293.2 1581.4,298.0 1572.8,301.5 1572.8,306.0 1568.8,305.4 1570.6,300.5" fill="#ffd633"/>
<polygon points="1572.8,301.5 1581.4,293.2 1581.4,298.0" fill="#e2a91c"/>
<polygon points="1623.2,308.1 1612.9,313.8 1573.3,318.4 1590.1,311.1" fill="#e2a91c"/>
<polygon points="1636.9,327.6 1620.5,335.5 1573.3,341.3 1589.6,333.5" fill="#e2a91c"/>
<polygon points="1636.9,343.9 1646.7,342.5 1643.2,351.1 1646.7,358.5 1631.2,359.9 1631.2,351.6" fill="#ffd633"/>
<polygon points="1631.2,351.6 1636.9,350.5 1631.2,359.9" fill="#e2a91c"/>
<polygon points="1572.8,301.2 1623.2,296.6 1623.2,308.1 1572.8,312.7" fill="#ffd633"/>
<polygon points="1573.3,318.4 1636.9,311.0 1636.9,327.6 1573.3,335.6" fill="#ffd633"/>
<polygon points="1573.3,341.3 1636.9,333.5 1636.9,350.5 1573.3,358.5" fill="#ffd633"/>
<text x="1597.4" y="307.078" font-family="'Liberation Serif',serif" font-weight="bold" font-size="6.6px" fill="#1a1a1a" text-anchor="middle" transform="rotate(-7 1597.4 304.9)" textLength="35.5" lengthAdjust="spacingAndGlyphs">MAGICAL</text>
<text x="1604.3" y="325.978" font-family="'Liberation Serif',serif" font-weight="bold" font-size="6.6px" fill="#1a1a1a" text-anchor="middle" transform="rotate(-8 1604.3 323.8)" textLength="34.5" lengthAdjust="spacingAndGlyphs">HOLIDAY</text>
<text x="1605.2" y="348.078" font-family="'Liberation Serif',serif" font-weight="bold" font-size="6.6px" fill="#1a1a1a" text-anchor="middle" transform="rotate(-8 1605.2 345.9)" textLength="31.5" lengthAdjust="spacingAndGlyphs">SEASON</text>
<path d="M1573.3 277.8 l0.9 1.9 l1.9 0.9 l-1.9 0.9 l-0.9 1.9 l-0.9 -1.9 l-1.9 -0.9 l1.9 -0.9 z" fill="#111"/>
<circle cx="1588.0" cy="285.8" r="0.9" fill="#111"/>
<circle cx="1567.0" cy="305.6" r="0.9" fill="#111"/>
<circle cx="1641.7" cy="337.1" r="0.9" fill="#111"/>
<circle cx="1626.0" cy="356.2" r="0.9" fill="#111"/>
<rect x="1609.1" y="279.1" width="41.0" height="20.8" rx="2.6" fill="#1daaf1"/><text x="1629.6" y="288.9" font-size="7.4px" font-weight="bold" fill="#fff" text-anchor="middle" textLength="32" lengthAdjust="spacingAndGlyphs">SPECIAL</text><text x="1629.6" y="296.3" font-size="7.4px" font-weight="bold" fill="#fff" text-anchor="middle" textLength="32.6" lengthAdjust="spacingAndGlyphs">EDITION</text>
<path d="M1705.7 303.0 L1718.7 303.0 M1713.8 303.0 L1716.6 305.3 M1713.8 303.0 L1716.6 300.7 M1705.7 303.0 L1715.8 298.3 M1712.0 300.1 L1715.2 301.1 M1712.0 300.1 L1714.2 296.7 M1705.7 303.0 L1716.2 292.1 M1712.2 296.3 L1715.5 295.8 M1712.2 296.3 L1713.5 292.0 M1705.7 303.0 L1712.0 290.7 M1709.6 295.4 L1712.6 293.5 M1709.6 295.4 L1709.9 290.8 M1705.7 303.0 L1709.7 285.4 M1708.2 292.1 L1710.6 289.0 M1708.2 292.1 L1707.5 287.6 M1705.7 303.0 L1705.7 287.8 M1705.7 293.6 L1707.3 289.6 M1705.7 293.6 L1704.1 289.6 M1705.7 303.0 L1701.7 285.4 M1703.2 292.1 L1703.9 287.6 M1703.2 292.1 L1700.8 289.0 M1705.7 303.0 L1699.4 290.7 M1701.8 295.4 L1701.5 290.8 M1701.8 295.4 L1698.8 293.5 M1705.7 303.0 L1695.2 292.1 M1699.2 296.3 L1697.9 292.0 M1699.2 296.3 L1695.9 295.8 M1705.7 303.0 L1695.6 298.3 M1699.4 300.1 L1697.2 296.7 M1699.4 300.1 L1696.2 301.1 M1705.7 303.0 L1692.7 303.0 M1697.6 303.0 L1694.8 300.7 M1697.6 303.0 L1694.8 305.3" fill="none" stroke="#ffd84a" stroke-width="0.6"/>
<path d="M1732.0 303.0 L1745.0 303.0 M1740.1 303.0 L1742.9 305.1 M1740.1 303.0 L1742.9 300.9 M1732.0 303.0 L1742.1 298.7 M1738.3 300.3 L1741.5 301.2 M1738.3 300.3 L1740.5 297.2 M1732.0 303.0 L1742.5 293.0 M1738.5 296.8 L1741.8 296.4 M1738.5 296.8 L1739.8 292.9 M1732.0 303.0 L1738.3 291.7 M1735.9 296.0 L1738.9 294.3 M1735.9 296.0 L1736.2 291.8 M1732.0 303.0 L1736.0 286.8 M1734.5 293.0 L1736.9 290.1 M1734.5 293.0 L1733.8 288.8 M1732.0 303.0 L1732.0 289.1 M1732.0 294.4 L1733.6 290.7 M1732.0 294.4 L1730.4 290.7 M1732.0 303.0 L1728.0 286.8 M1729.5 293.0 L1730.2 288.8 M1729.5 293.0 L1727.1 290.1 M1732.0 303.0 L1725.7 291.7 M1728.1 296.0 L1727.8 291.8 M1728.1 296.0 L1725.1 294.3 M1732.0 303.0 L1721.5 293.0 M1725.5 296.8 L1724.2 292.9 M1725.5 296.8 L1722.2 296.4 M1732.0 303.0 L1721.9 298.7 M1725.7 300.3 L1723.5 297.2 M1725.7 300.3 L1722.5 301.2 M1732.0 303.0 L1719.0 303.0 M1723.9 303.0 L1721.1 300.9 M1723.9 303.0 L1721.1 305.1" fill="none" stroke="#ffd84a" stroke-width="0.6"/>
<path d="M1706.0 341.0 L1719.0 341.0 M1714.1 341.0 L1716.9 338.6 M1714.1 341.0 L1716.9 343.4 M1706.0 341.0 L1716.1 345.8 M1712.3 344.0 L1715.5 343.0 M1712.3 344.0 L1714.5 347.5 M1706.0 341.0 L1716.5 352.2 M1712.5 347.9 L1715.8 348.4 M1712.5 347.9 L1713.8 352.3 M1706.0 341.0 L1712.3 353.6 M1709.9 348.8 L1712.9 350.7 M1709.9 348.8 L1710.2 353.5 M1706.0 341.0 L1710.0 359.1 M1708.5 352.2 L1710.9 355.4 M1708.5 352.2 L1707.8 356.8 M1706.0 341.0 L1706.0 356.6 M1706.0 350.7 L1707.6 354.8 M1706.0 350.7 L1704.4 354.8 M1706.0 341.0 L1702.0 359.1 M1703.5 352.2 L1704.2 356.8 M1703.5 352.2 L1701.1 355.4 M1706.0 341.0 L1699.7 353.6 M1702.1 348.8 L1701.8 353.5 M1702.1 348.8 L1699.1 350.7 M1706.0 341.0 L1695.5 352.2 M1699.5 347.9 L1698.2 352.3 M1699.5 347.9 L1696.2 348.4 M1706.0 341.0 L1695.9 345.8 M1699.7 344.0 L1697.5 347.5 M1699.7 344.0 L1696.5 343.0 M1706.0 341.0 L1693.0 341.0 M1697.9 341.0 L1695.1 343.4 M1697.9 341.0 L1695.1 338.6" fill="none" stroke="#ffd84a" stroke-width="0.6"/>
<path d="M1731.5 341.0 L1744.1 341.0 M1739.3 341.0 L1742.0 338.6 M1739.3 341.0 L1742.0 343.4 M1731.5 341.0 L1741.3 345.8 M1737.6 344.0 L1740.7 343.0 M1737.6 344.0 L1739.7 347.5 M1731.5 341.0 L1741.7 352.2 M1737.8 347.9 L1741.0 348.4 M1737.8 347.9 L1739.1 352.3 M1731.5 341.0 L1737.6 353.6 M1735.3 348.8 L1738.1 350.7 M1735.3 348.8 L1735.6 353.5 M1731.5 341.0 L1735.4 359.1 M1733.9 352.2 L1736.3 355.4 M1733.9 352.2 L1733.3 356.8 M1731.5 341.0 L1731.5 356.6 M1731.5 350.7 L1733.1 354.8 M1731.5 350.7 L1729.9 354.8 M1731.5 341.0 L1727.6 359.1 M1729.1 352.2 L1729.7 356.8 M1729.1 352.2 L1726.7 355.4 M1731.5 341.0 L1725.4 353.6 M1727.7 348.8 L1727.4 353.5 M1727.7 348.8 L1724.9 350.7 M1731.5 341.0 L1721.3 352.2 M1725.2 347.9 L1723.9 352.3 M1725.2 347.9 L1722.0 348.4 M1731.5 341.0 L1721.7 345.8 M1725.4 344.0 L1723.3 347.5 M1725.4 344.0 L1722.3 343.0 M1731.5 341.0 L1718.9 341.0 M1723.7 341.0 L1721.0 343.4 M1723.7 341.0 L1721.0 338.6" fill="none" stroke="#ffd84a" stroke-width="0.6"/>
<path d="M1684.3 303.5 H1752.9" stroke="#0c0c0c" stroke-width="1.6" stroke-linecap="round"/>
<path d="M1683.3 341 H1753.6" stroke="#0c0c0c" stroke-width="1.9" stroke-linecap="round"/>
<text x="1718.5" y="319.2" font-size="7px" fill="#333" text-anchor="middle" textLength="31.5" lengthAdjust="spacingAndGlyphs">Under The</text>
<text x="1718.5" y="328.2" font-size="9.2px" font-weight="bold" fill="#111" text-anchor="middle" textLength="42" lengthAdjust="spacingAndGlyphs">Mistletoe</text>
<rect x="1720" y="276.9" width="41.3" height="21.1" rx="2.6" fill="#1daaf1"/><text x="1740.65" y="286.7" font-size="7.4px" font-weight="bold" fill="#fff" text-anchor="middle" textLength="32" lengthAdjust="spacingAndGlyphs">SPECIAL</text><text x="1740.65" y="294.1" font-size="7.4px" font-weight="bold" fill="#fff" text-anchor="middle" textLength="32.6" lengthAdjust="spacingAndGlyphs">EDITION</text>
<!-- row3 -->
<polygon points="1577.9,418.9 1628.3,408.1 1629.5,418.4 1636.9,422.4 1637.5,432.1 1645.0,431.5 1643.8,450.4 1630.1,453.3 1629.5,456.2 1587.1,463.1 1585.4,456.2 1588.2,450.4 1572.8,454.5 1569.9,444.7 1576.8,442.4 1573.9,436.1 1583.1,433.8 1583.1,428.1 1578.5,427.0" fill="#0855f5"/>
<circle cx="1622.6" cy="398.9" r="2.6" fill="#0855f5"/>
<circle cx="1577.3" cy="412.4" r="1.8" fill="#0855f5"/>
<circle cx="1611.5" cy="403.2" r="1" fill="#0855f5"/>
<circle cx="1567.9" cy="426.0" r="1" fill="#0855f5"/>
<circle cx="1646.7" cy="424.0" r="1" fill="#0855f5"/>
<circle cx="1641.2" cy="456.4" r="1.2" fill="#0855f5"/>
<circle cx="1644.4" cy="467.3" r="1.8" fill="#0855f5"/>
<circle cx="1613.7" cy="468.4" r="1.1" fill="#0855f5"/>
<circle cx="1591.9" cy="473.6" r="1" fill="#0855f5"/>
<circle cx="1597.6" cy="470.2" r="0.6" fill="#0855f5"/>
<circle cx="1635.2" cy="461.3" r="0.6" fill="#0855f5"/>
<circle cx="1617.4" cy="405.0" r="0.5" fill="#0855f5"/>
<text x="1607.1" y="434.5" font-size="11px" font-weight="normal" font-style="normal" fill="#fff" text-anchor="middle" transform="rotate(-13 1607.1 431.0)" textLength="36" lengthAdjust="spacingAndGlyphs">FROSTY</text>
<text x="1610.0" y="445.1" font-size="11px" font-weight="normal" font-style="normal" fill="#fff" text-anchor="middle" transform="rotate(-13 1610.0 441.6)" textLength="29" lengthAdjust="spacingAndGlyphs">INTRO</text>
<polygon points="1692.5,418.0 1744.6,418.0 1744.6,422.4 1748.7,425.8 1748.7,428.7 1744.6,429.8 1744.6,434.2 1692.2,434.2 1692.2,429.3 1687.9,428.7 1687.9,425.2 1692.5,423.5" fill="#0855f5"/>
<polygon points="1698.8,437.0 1737.2,437.0 1737.2,441.3 1740.6,443.0 1740.6,447.6 1737.2,448.7 1737.2,452.9 1698.2,452.9 1698.2,448.7 1696.2,447.6 1696.2,442.4 1698.8,441.3" fill="#0855f5"/>
<text x="1718.3" y="430.7" font-size="12px" font-weight="bold" font-style="italic" fill="#fff" text-anchor="middle" transform="rotate(0 1718.3 426.4)" textLength="37.5" lengthAdjust="spacingAndGlyphs">FROSTY</text>
<text x="1718.3" y="449.1" font-size="12px" font-weight="bold" font-style="italic" fill="#fff" text-anchor="middle" transform="rotate(0 1718.3 444.8)" textLength="24" lengthAdjust="spacingAndGlyphs">TEXT</text>
<!-- row4 -->
<g clip-path="url(#cpS)"><rect x="1559.8" y="502.8" width="95.2" height="95.2" fill="#fff"/>
<circle cx="1590.5" cy="508.1" r="12.4" fill="#ffdd66"/>
<circle cx="1568.2" cy="507.7" r="20" fill="#ffc400" fill-opacity="0.93"/>
<circle cx="1590.5" cy="508.1" r="12.4" fill="#ffb300" fill-opacity="0"/>
<circle cx="1654.9" cy="508.3" r="16.6" fill="#ff9500"/>
<circle cx="1638.9" cy="504.3" r="6" fill="#ffdd66" fill-opacity="0.95"/>
<circle cx="1654.9" cy="565.6" r="12.4" fill="#ffc400"/>
<circle cx="1559.8" cy="566.2" r="6.3" fill="#ffc400"/>
<circle cx="1559.8" cy="560.5" r="5.7" fill="#ffcf40" fill-opacity="0.8"/>
<circle cx="1607.1" cy="597.9" r="11.1" fill="#ffdd66"/>
<circle cx="1624.9" cy="596" r="18.3" fill="#ffc400" fill-opacity="0.93"/>
<circle cx="1572.8" cy="597.9" r="6" fill="#ffdd66"/>
</g>
<clipPath id="cpL1"><circle cx="1568.2" cy="507.7" r="20"/></clipPath><g clip-path="url(#cpS)"><circle cx="1590.5" cy="508.1" r="12.4" fill="#ffb300" clip-path="url(#cpL1)"/></g>
<clipPath id="cpL2"><circle cx="1624.9" cy="596" r="18.3"/></clipPath><g clip-path="url(#cpS)"><circle cx="1607.1" cy="597.9" r="11.1" fill="#ffb300" clip-path="url(#cpL2)"/></g>
<text x="1572.8" y="549" font-family="'Liberation Serif',serif" font-weight="bold" font-size="17px" fill="#4a4a4a" textLength="69" lengthAdjust="spacingAndGlyphs">Summer</text>
<text x="1573.3" y="562.7" font-family="'Liberation Serif',serif" font-weight="bold" font-size="17px" fill="#4a4a4a" textLength="42" lengthAdjust="spacingAndGlyphs">Intro</text>
<circle cx="1694" cy="564.5" r="18" fill="#ffc400"/>
<circle cx="1718.9" cy="528.1" r="2.75" fill="#b88a00"/>
<circle cx="1742.9" cy="551.9" r="6" fill="#ffdd66"/>
<circle cx="1683.3" cy="578.2" r="4.2" fill="#ff8c1a" fill-opacity="0.75"/>
<text x="1683.6" y="549" font-family="'Liberation Serif',serif" font-weight="bold" font-size="17px" fill="#4a4a4a" textLength="69.3" lengthAdjust="spacingAndGlyphs">Summer</text>
<text x="1683.9" y="562.7" font-family="'Liberation Serif',serif" font-weight="bold" font-size="17px" fill="#4a4a4a" textLength="35" lengthAdjust="spacingAndGlyphs">Text</text>
<!-- row5 -->
<g clip-path="url(#cpT)"><rect x="1559.8" y="617.8" width="95.2" height="95.2" fill="#fff"/>
<polygon points="1597.4,617.8 1654.9,617.8 1654.9,644.5" fill="#ffe59a"/>
<polygon points="1559.8,663.4 1569.7,660.6 1570.8,646.2 1569.0,646.2 1564.6,712.9 1559.8,712.9" fill="#ffe08a"/>
<path d="M1573.9 617.8 L1587.1 617.8 Q1589.4 629.0 1585.0 643.9 Q1579.6 649.7 1572.2 646.2 Q1573.3 654.3 1572.2 660.0 L1569.3 661.1 Z" fill="#b0d8da"/>
<path d="M1559.8 617.8 L1574.7 617.8 L1572.2 647.4 L1569.7 660.6 Q1565.3 664.6 1559.8 664.6 Z" fill="#b2bd74"/>
<path d="M1654.9 668.0 Q1645.5 681.8 1643.8 701.5 L1654.9 696.1 Z" fill="#e8e4da"/>
<polygon points="1619.2,712.9 1643.2,701.8 1643.2,712.9" fill="#ffd34f"/>
<polygon points="1643.2,701.8 1654.9,696.1 1654.9,712.9 1643.2,712.9" fill="#e9ba3a"/>
<path d="M1559.8 699.5 Q1577.9 697.2 1603.1 701.8 Q1628.3 707.0 1645.5 712.9 L1559.8 712.9 Z" fill="#b8ab8c"/>
<polygon points="1559.8,699.7 1565.5,699.2 1564.6,712.9 1559.8,712.9" fill="#b89a52"/>
<path d="M1618.6 712.9 L1630.1 707.6 Q1637.5 709.8 1645.5 712.9 Z" fill="#b8922e"/>
<path d="M1559.8 687.5 Q1569.9 684.0 1577.9 686.3 Q1582.5 693.2 1582.5 703.5 Q1589.4 700.1 1594.0 693.2 Q1604.3 690.9 1612.3 702.4 Q1614.6 710.4 1619.2 712.9" fill="none" stroke="#ffd9b5" stroke-width="0.4"/>
</g>
<text x="1607.4" y="667.8" font-weight="bold" font-size="14.8px" fill="#444" text-anchor="middle" textLength="57.9" lengthAdjust="spacingAndGlyphs">Twiggy</text>
<text x="1607.6" y="682.3" font-weight="bold" font-size="14.8px" fill="#444" text-anchor="middle" textLength="38.7" lengthAdjust="spacingAndGlyphs">Intro</text>
<ellipse cx="1707.4" cy="666.9" rx="21.8" ry="12.4" fill="#ddd6c6" transform="rotate(10 1707.4 666.9)"/>
<path d="M1709.7 654.8 Q1714.3 647.4 1723.4 645.1 L1726.3 648.8 L1729.7 645.7 Q1737.2 650.8 1738.9 657.1 Q1724.6 653.1 1709.7 654.8 Z" fill="#ffeeb8"/>
<path d="M1722.3 666.9 Q1729.2 664.6 1734.3 665.9 L1740.6 670.3 L1739.5 674.9 L1743.5 676.6 L1739.5 686.9 L1725.7 678.3 Z" fill="#a9d6d8"/>
<path d="M1702.8 668.0 Q1707.4 656.5 1726.9 654.8 Q1742.9 658.8 1746.9 672.6 Q1733.8 677.2 1724.6 680.6 Q1704.0 679.5 1702.8 668.0" fill="none" stroke="#f7c9a0" stroke-width="0.4"/>
<text x="1718.6" y="663.4" font-weight="bold" font-size="10.8px" fill="#444" text-anchor="middle" textLength="43" lengthAdjust="spacingAndGlyphs">Twiggy</text>
<text x="1718.8" y="675.4" font-weight="bold" font-size="10.8px" fill="#444" text-anchor="middle" textLength="24" lengthAdjust="spacingAndGlyphs">Text</text>
<!-- row6 -->
<rect x="1580.7" y="761.9" width="54.7" height="21.5" fill="#ffd633"/>
<text x="1608" y="778.2" font-size="15.2px" font-weight="bold" fill="#232e3a" text-anchor="middle" textLength="41" lengthAdjust="spacingAndGlyphs">STEP</text>
<text x="1607.6" y="798.8" font-size="12.6px" font-weight="bold" fill="#232e3a" text-anchor="middle" textLength="17.5" lengthAdjust="spacingAndGlyphs">UP</text>
<text x="1718.6" y="771.4" font-size="14.5px" font-weight="bold" fill="#232e3a" text-anchor="middle" textLength="26.5" lengthAdjust="spacingAndGlyphs">ROLL</text>
<rect x="1699.2" y="776.1" width="38.6" height="26.5" fill="#ffd633"/>
<text x="1718.6" y="795.4" font-size="16.5px" font-weight="bold" fill="#232e3a" text-anchor="middle" textLength="25.5" lengthAdjust="spacingAndGlyphs">OUT</text>
</svg>
</div>
<svg class="abs" style="left:1873px;top:109px" width="20" height="20" viewBox="0 0 20 20"><path d="M4 4 L16 16 M16 4 L4 16" stroke="#2d3748" stroke-width="2.3" fill="none"/></svg>
<div id="timeline">
<svg class="abs" style="left:0;top:0" width="1773" height="180" viewBox="147 900 1773 180" font-family="'Liberation Sans',sans-serif">
<defs>
<linearGradient id="tsky" x1="0" y1="966" x2="0" y2="1030" gradientUnits="userSpaceOnUse"><stop offset="0" stop-color="#cddfd6"/><stop offset="0.25" stop-color="#efecc6"/><stop offset="0.45" stop-color="#fde27a"/><stop offset="0.555" stop-color="#fdd04c"/><stop offset="0.59" stop-color="#9a7426"/><stop offset="0.74" stop-color="#7a6a2c"/><stop offset="1" stop-color="#50522f"/></linearGradient>
<clipPath id="vtc"><rect x="243.9" y="965.8" width="837" height="63.7" rx="4"/></clipPath>
<symbol id="thumb" viewBox="0 965.8 36 63.7"><rect x="0" y="965.8" width="36" height="63.7" fill="url(#tsky)"/><circle cx="18" cy="995.3" r="6.5" fill="#fff2b0" fill-opacity="0.55"/><circle cx="18" cy="995.3" r="2.8" fill="#fffbe6"/><circle cx="27" cy="1006" r="3" fill="#a8741a"/><circle cx="31" cy="1012" r="3.5" fill="#b9821a"/><circle cx="31" cy="1012" r="1.8" fill="#5e3c0c"/><circle cx="4" cy="1019" r="4.6" fill="#c98d1c"/><circle cx="4" cy="1019" r="2.6" fill="#6a4510"/><circle cx="14" cy="1010" r="2.6" fill="#9a7420"/><circle cx="20" cy="1023" r="4" fill="#44503a"/></symbol>
<g id="hdl"><rect x="0" y="0" width="1.1" height="12" fill="#fff"/><rect x="2.9" y="0" width="1.1" height="12" fill="#fff"/></g>
</defs>
<rect x="243.0" y="900.5" width="1" height="13.5" fill="#dadada"/>
<text x="248.1" y="913" font-size="7.6px" fill="#8c8c8c" letter-spacing="0.6">0 SEC</text>
<rect x="522.1" y="900.5" width="1" height="13.5" fill="#dadada"/>
<text x="527.2" y="913" font-size="7.6px" fill="#8c8c8c" letter-spacing="0.6">5</text>
<rect x="801.9" y="900.5" width="1" height="13.5" fill="#dadada"/>
<text x="807.0" y="913" font-size="7.6px" fill="#8c8c8c" letter-spacing="0.6">10</text>
<rect x="1081.1" y="900.5" width="1" height="13.5" fill="#dadada"/>
<text x="1086.1999999999998" y="913" font-size="7.6px" fill="#8c8c8c" letter-spacing="0.6">15</text>
<rect x="1360.9" y="900.5" width="1" height="13.5" fill="#dadada"/>
<text x="1366.0" y="913" font-size="7.6px" fill="#8c8c8c" letter-spacing="0.6">20</text>
<rect x="1640.3" y="900.5" width="1" height="13.5" fill="#dadada"/>
<text x="1645.3999999999999" y="913" font-size="7.6px" fill="#8c8c8c" letter-spacing="0.6">25</text>
<path d="M246.5 922 H1920 V962 H246.5 Q243.5 962 243.5 959 V925 Q243.5 922 246.5 922Z" fill="#f5f5f5"/>
<rect x="1075" y="965.8" width="845" height="63.7" fill="#f5f5f5"/>
<rect x="272.5" y="923.3" width="248.7" height="36.8" rx="3" fill="#3f4f68" stroke="#00aaff" stroke-width="2.8"/>
<rect x="551.6" y="922" width="249.4" height="39.6" rx="3.5" fill="#3f4f68"/>
<rect x="831.2" y="922" width="249.7" height="39.6" rx="3.5" fill="#3f4f68"/>
<use href="#hdl" x="280" y="936"/>
<use href="#hdl" x="510.2" y="936"/>
<use href="#hdl" x="559.8" y="936"/>
<use href="#hdl" x="789.6" y="936"/>
<use href="#hdl" x="839" y="936"/>
<use href="#hdl" x="1069.2" y="936"/>
<text x="297.7" y="947.2" font-size="14.2px" fill="#e1e5ec" textLength="149" lengthAdjust="spacingAndGlyphs">YOUR TEXT GOES HERE</text>
<text x="577.2" y="947.2" font-size="14.2px" fill="#e1e5ec" textLength="149" lengthAdjust="spacingAndGlyphs">YOUR TEXT GOES HERE</text>
<circle cx="912.6" cy="942" r="3.2" fill="#ffe01a"/>
<text x="922.5" y="946.6" font-size="11.6px" fill="#e1e5ec" textLength="43.3" lengthAdjust="spacing">OUTRO</text>
<g clip-path="url(#vtc)"><rect x="243.9" y="965.8" width="837" height="63.7" fill="#000"/>
<use href="#thumb" x="282.8" y="965.8" width="36" height="63.7"/>
<use href="#thumb" x="396.9" y="965.8" width="36" height="63.7"/>
<use href="#thumb" x="510.9" y="965.8" width="36" height="63.7"/>
<use href="#thumb" x="625.1" y="965.8" width="36" height="63.7"/>
<use href="#thumb" x="739" y="965.8" width="36" height="63.7"/>
<use href="#thumb" x="853.1" y="965.8" width="36" height="63.7"/>
<use href="#thumb" x="967.2" y="965.8" width="36" height="63.7"/>
</g>
<rect x="250.2" y="974.3" width="80.4" height="14.9" rx="7.4" fill="#1c1c1c" fill-opacity="0.45"/>
<path d="M258.6 984.6 L258 979.2 L261.2 981.6 L264.3 977.6 L267.4 981.6 L270.6 979.2 L270 984.6 Z" fill="#ffc21a"/>
<text x="274.7" y="985.3" font-size="9.4px" font-weight="bold" fill="#fff" textLength="46.3" lengthAdjust="spacingAndGlyphs">PREMIUM</text>
<use href="#hdl" x="252.4" y="992"/><use href="#hdl" x="1069.2" y="992"/>
<circle cx="195" cy="953.8" r="29.8" fill="#00aaff"/>
<path d="M188.6 943.6 L206 954 L188.6 964.4 Z" fill="#fff" stroke="#fff" stroke-width="3" stroke-linejoin="round"/>
<circle cx="195" cy="1013.6" r="17.7" fill="#f04a72"/>
<path d="M189.2 1013.6 H200.8 M195 1007.8 V1019.4" stroke="#fff" stroke-width="2.1" fill="none"/>
<rect x="169.5" y="1050" width="1550" height="11.8" rx="5.9" fill="#f2f2f2"/>
<rect x="169.5" y="1050" width="147" height="11.8" rx="5.9" fill="#cdcdcd"/>
<text x="1746" y="1062" font-size="15px" fill="#2d3748" textLength="28.5" lengthAdjust="spacingAndGlyphs">0:15</text>
<rect x="1797" y="1048" width="1" height="18" fill="#b4b4b4"/>
<circle cx="1831.3" cy="1056.8" r="9.2" fill="#e2e2e2"/>
<circle cx="1859" cy="1056.8" r="9.2" fill="#e2e2e2"/>
<circle cx="1887" cy="1056.8" r="9.2" fill="#e2e2e2"/>
<path d="M1826.8 1056.8 H1835.8 M1854.5 1056.8 H1863.5 M1859 1052.3 V1061.3" stroke="#333" stroke-width="1.5" fill="none"/>
<path d="M1891.6 1052.2 L1888.2 1055.6 M1888.2 1052.6 V1055.6 H1891.2 M1882.4 1061.4 L1885.8 1058 M1885.8 1061 V1058 H1882.8" stroke="#333" stroke-width="1.3" fill="none"/>
<filter id="cbl" x="-100%" y="-100%" width="300%" height="300%"><feGaussianBlur stdDeviation="9"/></filter><circle cx="1863.8" cy="978" r="27" fill="#000" fill-opacity="0.13" filter="url(#cbl)"/>
<circle cx="1863.8" cy="975.8" r="24" fill="#0a7cff"/>
<path d="M1856 963.8 H1871.5 Q1875 963.8 1875 967.3 V987.2 L1870.4 984.4 H1856.5 Q1853 984.4 1853 980.9 V967.3 Q1853 963.8 1856 963.8Z" fill="#fff"/>
<path d="M1857 978 Q1864 983.4 1871 978" stroke="#0a7cff" stroke-width="1.4" fill="none" stroke-linecap="round"/>
<circle cx="1884" cy="961.3" r="4.5" fill="#e0191c"/>
</svg></div>
</body>
</html>
